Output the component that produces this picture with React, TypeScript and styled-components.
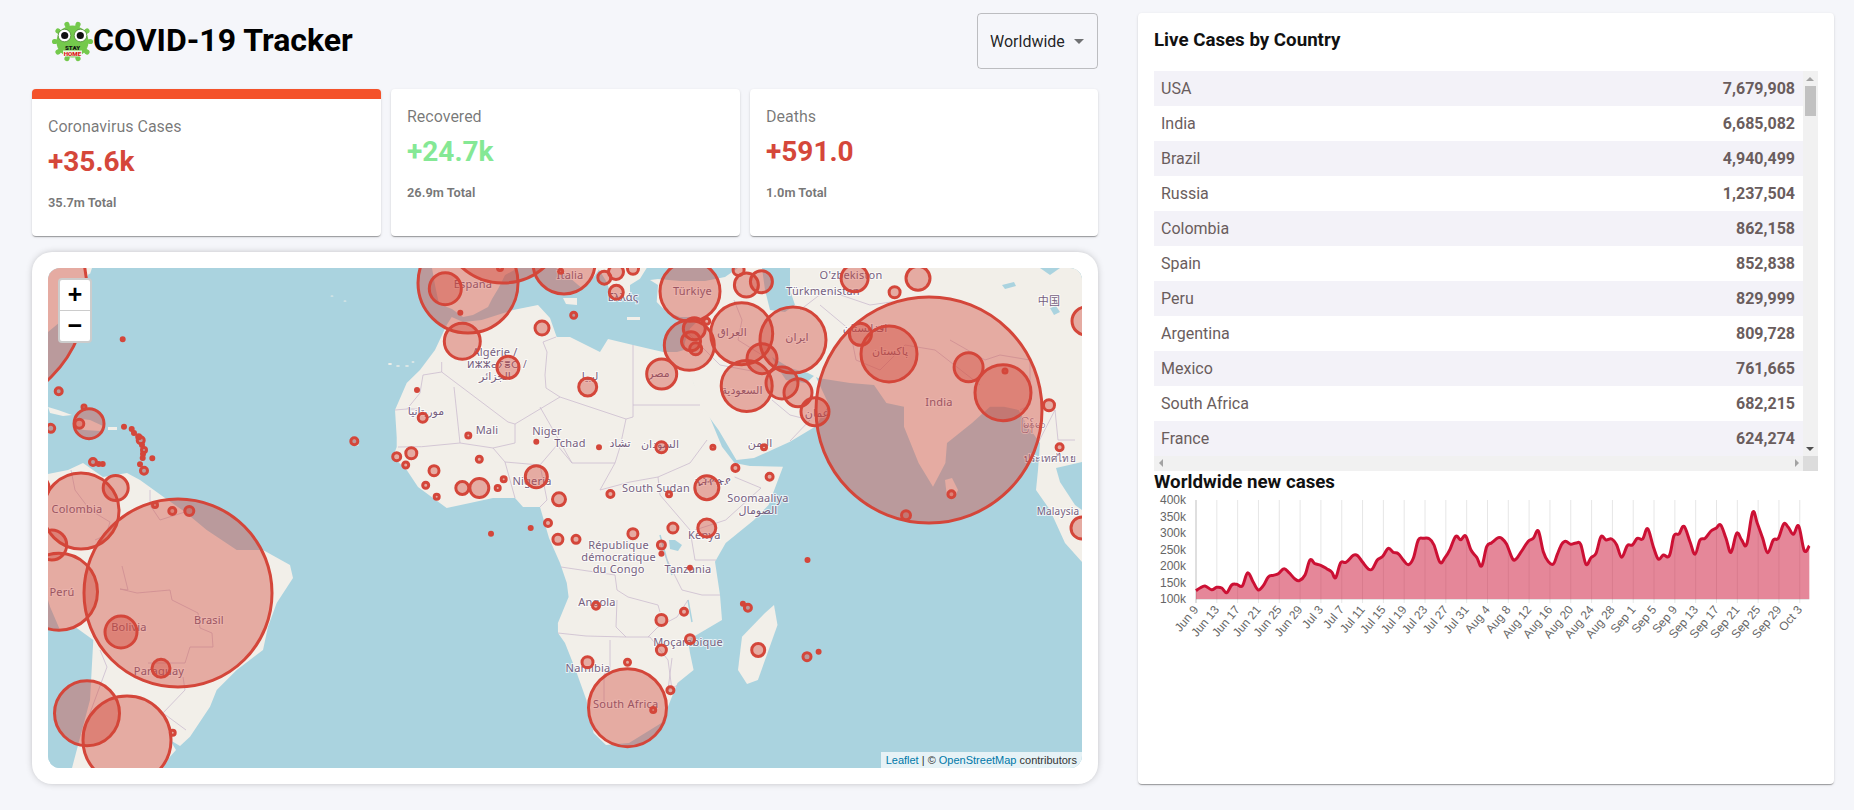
import React from "react";
import styled, { createGlobalStyle } from "styled-components";

const Global = createGlobalStyle`
  html, body { margin: 0; padding: 0; background: #f5f6fa; font-family: Roboto, "Liberation Sans", sans-serif; }
`;

const Page = styled.div`
  display: flex;
  align-items: flex-start;
  gap: 40px;
  width: 1854px;
  height: 810px;
  box-sizing: border-box;
  padding: 13px 20px 0 32px;
  overflow: hidden;
`;
const LeftColumn = styled.main`
  width: 1066px;
  flex: none;
  display: flex;
  flex-direction: column;
`;
const Header = styled.header`
  height: 56px;
  display: flex;
  align-items: center;
  justify-content: space-between;
  margin-bottom: 20px;
`;
const Brand = styled.div`
  display: flex;
  align-items: center;
  padding-left: 20px;
`;
const Title = styled.h1`
  margin: -2px 0 0 0;
  font-size: 32px;
  font-weight: 700;
  line-height: 1.2;
  color: #000;
`;
const Dropdown = styled.div`
  width: 121px;
  height: 56px;
  box-sizing: border-box;
  border: 1px solid rgba(0, 0, 0, 0.23);
  border-radius: 4px;
  padding-left: 12px;
  display: flex;
  align-items: center;
  font-size: 16px;
  color: rgba(0, 0, 0, 0.87);
  position: relative;
`;
const DropArrow = styled.span`
  position: absolute;
  right: 13px;
  top: 25px;
  width: 0;
  height: 0;
  border-left: 5px solid transparent;
  border-right: 5px solid transparent;
  border-top: 5px solid rgba(0, 0, 0, 0.54);
`;
const Stats = styled.section`
  display: grid;
  grid-template-columns: 349px 349px 348px;
  gap: 10px;
  height: 147px;
`;
const StatCard = styled.article<{ $active?: boolean }>`
  background: #fff;
  border-radius: 4px;
  overflow: hidden;
  box-sizing: border-box;
  padding: 16px 16px 0;
  border-top: ${(p) => (p.$active ? "10px solid #f4522a" : "0 none")};
  box-shadow: 0 2px 1px -1px rgba(0, 0, 0, 0.2), 0 1px 1px rgba(0, 0, 0, 0.14), 0 1px 3px rgba(0, 0, 0, 0.12);
`;
const StatLabel = styled.div`
  font-size: 16px;
  line-height: 24px;
  color: rgba(0, 0, 0, 0.54);
`;
const StatValue = styled.div<{ $color: string }>`
  font-size: 28px;
  font-weight: 700;
  line-height: 34px;
  margin-top: 6px;
  color: ${(p) => p.$color};
`;
const StatTotal = styled.div`
  font-size: 12.8px;
  font-weight: 700;
  line-height: 18px;
  margin-top: 15px;
  color: rgba(0, 0, 0, 0.54);
`;
const MapCard = styled.section`
  margin-top: 16px;
  height: 532px;
  box-sizing: border-box;
  padding: 16px;
  background: #fff;
  border-radius: 20px;
  box-shadow: 0 0 8px -3px rgba(0, 0, 0, 0.45);
`;
const MapFrame = styled.div`
  position: relative;
  height: 500px;
  border-radius: 12px;
  overflow: hidden;
  background: #aad3df;
  svg { display: block; }
`;
const ZoomControl = styled.div`
  position: absolute;
  left: 10px;
  top: 10px;
  width: 30px;
  border: 2px solid rgba(0, 0, 0, 0.2);
  border-radius: 4px;
  background-clip: padding-box;
  background: #fff;
`;
const ZoomButton = styled.div<{ $last?: boolean }>`
  height: 30px;
  overflow: hidden;
  text-align: center;
  font: 700 25px/33px "Liberation Mono", monospace;
  color: #000;
  border-bottom: ${(p) => (p.$last ? "0 none" : "1px solid #ccc")};
`;
const Attribution = styled.div`
  position: absolute;
  right: 0;
  bottom: 0;
  height: 16px;
  padding: 0 5px;
  font: 11px/16px "Liberation Sans", sans-serif;
  color: #333;
  background: rgba(255, 255, 255, 0.7);
  a { color: #0078a8; text-decoration: none; }
`;
const RightCard = styled.aside`
  width: 696px;
  height: 771px;
  flex: none;
  box-sizing: border-box;
  padding: 16px;
  background: #fff;
  border-radius: 4px;
  box-shadow: 0 2px 1px -1px rgba(0, 0, 0, 0.2), 0 1px 1px rgba(0, 0, 0, 0.14), 0 1px 3px rgba(0, 0, 0, 0.12);
`;
const SectionTitle = styled.h3`
  margin: 0;
  font-size: 18.72px;
  font-weight: 700;
  line-height: 22px;
  color: #111;
`;
const TableTitle = styled(SectionTitle)`
  margin-bottom: 20px;
`;
const TableBox = styled.div`
  display: grid;
  grid-template-columns: 649px 15px;
  grid-template-rows: 385px 15px;
  height: 400px;
`;
const Rows = styled.div`
  overflow: hidden;
`;
const Row = styled.div<{ $odd: boolean }>`
  height: 35px;
  box-sizing: border-box;
  padding: 0 8px 0 7px;
  display: flex;
  align-items: center;
  justify-content: space-between;
  font-size: 16px;
  color: #6a5d5d;
  background: ${(p) => (p.$odd ? "#f3f2f8" : "#fff")};
  strong { font-weight: 700; }
`;
const VBar = styled.div`
  background: #f1f1f1;
  position: relative;
`;
const VThumb = styled.div`
  position: absolute;
  left: 2px;
  top: 15px;
  width: 11px;
  height: 30px;
  background: #c1c1c1;
`;
const HBar = styled.div`
  background: #f1f1f1;
  position: relative;
`;
const Corner = styled.div`
  background: #dcdcdc;
`;
const Arrow = styled.span<{ $dir: "up" | "down" | "left" | "right"; $dark?: boolean }>`
  position: absolute;
  width: 0;
  height: 0;
  ${(p) => {
    const c = p.$dark ? "#505050" : "#a3a3a3";
    if (p.$dir === "up") return `left:3px;top:6px;border-left:4px solid transparent;border-right:4px solid transparent;border-bottom:4px solid ${c};`;
    if (p.$dir === "down") return `left:3px;bottom:5px;border-left:4px solid transparent;border-right:4px solid transparent;border-top:4px solid ${c};`;
    if (p.$dir === "left") return `left:5px;top:3px;border-top:4px solid transparent;border-bottom:4px solid transparent;border-right:4px solid ${c};`;
    return `right:4px;top:3px;border-top:4px solid transparent;border-bottom:4px solid transparent;border-left:4px solid ${c};`;
  }}
`;
const ChartSvg = styled.svg`
  display: block;
  margin-top: 2px;
`;
const AxisText = styled.text`
  font: 12px "Liberation Sans", Arial, sans-serif;
  fill: #666;
`;
const MapLabel = styled.text<{ $size?: number }>`
  font-family: "Noto Sans", "DejaVu Sans", "Noto Sans CJK SC", sans-serif;
  font-size: ${(p) => p.$size || 11}px;
  letter-spacing: 0.2px;
  fill: #76607f;
  text-anchor: middle;
  dominant-baseline: middle;
  stroke: rgba(255, 255, 255, 0.7);
  stroke-width: 2px;
  paint-order: stroke;
`;
const LogoText = styled.text<{ $color: string }>`
  font: 900 6.2px Roboto, sans-serif;
  fill: ${(p) => p.$color};
  text-anchor: middle;
`;

const countries: [string, string][] = [
  ["USA", "7,679,908"], ["India", "6,685,082"], ["Brazil", "4,940,499"], ["Russia", "1,237,504"],
  ["Colombia", "862,158"], ["Spain", "852,838"], ["Peru", "829,999"], ["Argentina", "809,728"],
  ["Mexico", "761,665"], ["South Africa", "682,215"], ["France", "624,274"],
];

const stats = [
  { label: "Coronavirus Cases", value: "+35.6k", total: "35.7m Total", color: "#d5473a", active: true },
  { label: "Recovered", value: "+24.7k", total: "26.9m Total", color: "#85e895", active: false },
  { label: "Deaths", value: "+591.0", total: "1.0m Total", color: "#d5473a", active: false },
];

function Logo() {
  const spikes = [0, 36, 72, 108, 144, 180, 216, 252, 288, 324];
  return (
    <svg width="41" height="41" viewBox="0 0 41 41">
      {spikes.map((a) => (
        <g key={a} transform={`rotate(${a + 18} 20.5 20.5)`}>
          <rect x="18.5" y="2" width="4" height="6" fill="#74c94c" />
          <circle cx="20.5" cy="2.6" r="2.6" fill="#74c94c" />
        </g>
      ))}
      <circle cx="20.5" cy="20.5" r="16" fill="#74c94c" />
      <circle cx="12.5" cy="14.5" r="6.3" fill="#fff" stroke="#3d7d22" strokeWidth="0.7" />
      <circle cx="28.5" cy="14.5" r="6.3" fill="#fff" stroke="#3d7d22" strokeWidth="0.7" />
      <circle cx="12.7" cy="14.5" r="3.6" fill="#111" />
      <circle cx="28.3" cy="14.5" r="3.6" fill="#111" />
      <rect x="11" y="29.5" width="19" height="6" fill="#fff" opacity="0.85" />
      <LogoText $color="#111" x="20.5" y="29">STAY</LogoText>
      <LogoText $color="#e01818" x="20.5" y="34.5">HOME</LogoText>
    </svg>
  );
}

const p1 = [18,287,30,279,45,273,65,284,80,277,95,279,110,293,125,270,140,268,157,273,173,233,190,262,205,285,220,272,235,246,250,241,265,236,282,221,297,233,315,252,328,257,345,240,360,195,375,206,392,211,410,221,425,231,437,248,452,203,468,202,490,181,503,182,518,202,535,222,547,222,562,195,578,184,595,160,610,172,625,176,640,195,655,209,670,190,685,135,700,130,718,131,732,150,750,202,765,188,780,163,797,124,812,134,827,123,843,165,860,187,875,213,890,155,905,143,925,128];
const p2 = [5,130,20,148,38,192,50,190,65,168,85,139,100,130,115,108,130,170,145,200,160,207,172,178,185,148,197,139,212,148,228,144,242,148,258,208,273,188,288,175,303,125,318,135,335,132,350,150,365,187,382,152,397,150,412,130,428,132,443,101,460,155,475,192,490,180,508,182,522,122,537,117,552,94,570,140,585,178,600,135,615,130,633,108,648,100,662,90,678,130,693,172,710,115,725,135,740,148,758,52,772,85,788,130,803,173,820,135,835,130,851,87,865,97,880,118,896,93,913,167,928,152];

function curvePoints(): [number, number][] {
  const pts: [number, number][] = [];
  for (let i = 0; i < p1.length; i += 2) pts.push([1190 + p1[i] / 3, 495 + p1[i + 1] / 3]);
  for (let i = 0; i < p2.length; i += 2) pts.push([1500 + p2[i] / 3, 495 + p2[i + 1] / 3]);
  return pts;
}
function smooth(pts: [number, number][]) {
  let d = `M${pts[0][0].toFixed(1)},${pts[0][1].toFixed(1)}`;
  for (let i = 0; i < pts.length - 1; i++) {
    const a = pts[Math.max(0, i - 1)], b = pts[i], c = pts[i + 1], e = pts[Math.min(pts.length - 1, i + 2)];
    const k = 0.18;
    d += ` C${(b[0] + (c[0] - a[0]) * k).toFixed(1)},${(b[1] + (c[1] - a[1]) * k).toFixed(1)} ${(c[0] - (e[0] - b[0]) * k).toFixed(1)},${(c[1] - (e[1] - b[1]) * k).toFixed(1)} ${c[0].toFixed(1)},${c[1].toFixed(1)}`;
  }
  return d;
}

const xTicks = ["Jun 9","Jun 13","Jun 17","Jun 21","Jun 25","Jun 29","Jul 3","Jul 7","Jul 11","Jul 15","Jul 19","Jul 23","Jul 27","Jul 31","Aug 4","Aug 8","Aug 12","Aug 16","Aug 20","Aug 24","Aug 28","Sep 1","Sep 5","Sep 9","Sep 13","Sep 17","Sep 21","Sep 25","Sep 29","Oct 3"];
const yTicks = ["400k","350k","300k","250k","200k","150k","100k"];

function Chart() {
  const pts = curvePoints();
  const line = smooth(pts);
  const last = pts[pts.length - 1];
  return (
    <ChartSvg width="664" height="170" viewBox="1154 495 664 170">
      {xTicks.map((t, i) => {
        const x = 1196 + i * 20.82;
        return (
          <g key={t}>
            <line x1={x} x2={x} y1={500} y2={603} stroke={i === 0 ? "rgba(0,0,0,0.25)" : "rgba(0,0,0,0.1)"} />
            <AxisText textAnchor="end" transform={`translate(${x + 3} 610) rotate(-50)`}>{t}</AxisText>
          </g>
        );
      })}
      {yTicks.map((t, i) => (
        <AxisText key={t} x={1186} y={504 + i * 16.5} textAnchor="end">{t}</AxisText>
      ))}
      <path d={`${line} L${last[0]},599 L${pts[0][0]},599 Z`} fill="rgba(204,16,52,0.5)" />
      <line x1={1196} x2={last[0]} y1={599.5} y2={599.5} stroke="rgba(0,0,0,0.1)" />
      <path d={line} fill="none" stroke="#cc1034" strokeWidth="3" />
    </ChartSvg>
  );
}

const poly = (s: string) => "M" + s.trim().replace(/\s+/g, " L") + " Z";
const land = [
  poly("48,268 85,268 90,272 85,280 73,300 60,322 48,332"),
  poly("48,474 68,470 83,463 103,477 127,473 140,480 165,498 185,512 206.7,530 236.7,550 263,550 290,565 293,578 276.7,603 268,626.7 263,650 236.7,670 216.7,690 210,706.7 190,736.7 180,746 170,740 176,750 170,756.7 163,768 72,768 90,700 93.3,640 76.7,628 60,630 50,606.7 48,600"),
  poly("432,268 435,285 439,304 452,309 463,317 473,315 488,307 492,299 498,289 505,275 518,268"),
  poly("556,268 566.7,275 576.7,283.7 583,289 590,282 595,275 600,268"),
  poly("598,268 606.7,282 610,292 616.7,300 623,297 630,298.7 630,285 640,278.7 646.7,268"),
  poly("563,298 577,298 577,305 566,304"),
  poly("627,317 640,317 640,320 627,320"),
  poly("650,280 658,279 680,281 705,281 725,277 738,268 762,268 1082,268 1082,562 1065,543 1050,510 1036,490 1038,470 1040,443 1025.7,423 1018.6,410 1004,406.7 990,406.7 972,423 947,443 945.4,463 933,486.7 918.6,463 904,426.7 904,406.7 886.4,403 874,385 850,383 818,378 808,373 790,368 772,357 777,367 786,380 797,381.7 806,383 815,375 829,405 815,426.7 790,441.7 754,458 736.4,460 718.6,430 704,410 690,375 684,352 685,342 690,328.7 696.7,322 693,317 680,317 666.7,312 656.7,302 658,285"),
  poly("538,305 550,318 556.7,337 570,337 600,352 608,339 633,345 663,352 677,352 684,350 693.6,383 708,413 722,446.7 734.6,463 750,466 783,466.7 768.6,505 754,520 725.7,543 715,561.7 720,595 722,620 688,640 690,653 693.6,670 677.5,683 661.4,723 629,743 606,745 593.6,733 586.4,700 575.7,670 565,643 558,633 557.9,623 568.6,597 566.8,583 560,563 549,538 540,507 523,507 515,498 493,498 470,503 446.7,508 418,487 406.7,470 393,457 396.7,447 396.7,437 395,410 406.7,383 420,370 435,350 446.7,325 451.7,317 463,322 481.7,320 513,310"),
  poly("774,605 777.5,625 768.6,650 757.9,680 747,684 738,670 742,636.7 765,613"),
  poly("945,480 952,478 958,490 954,498 947,497"),
  poly("48,407 58,410 72,415 63,416 50,413"),
  poly("74,418 90,420 103,426 100,431 84,430 76,428"),
  poly("108,427 117,427 117,430 108,430"),
  poly("82,268 92,268 90,274 84,272"),
];
const islands: [number, number, number, number][] = [
  [332,296,1.5,.6],[345,301,1.5,.6],[390,364,2,1],[398,366,2,.8],[407,366,2,.8],[413,362,1.5,.8],[354,439,2,.8],[357,445,2,.8],[1076,270,3,2],
];
const waters = [
  poly("762,268 790,268 790,290 795,305 785,312 770,310 765,290"),
  poly("1056,468 1082,462 1082,510 1075,505 1060,482"),
  poly("669,540 675,540 682,545 678,551 670,549"),
  poly("1002,285 1014,282 1016,286 1005,289"),
  poly("1050,308 1056,306 1060,312 1054,315"),
  poly("1040,268 1060,268 1050,275"),
];
const borders = [
  "441.7,362 441.7,372 508,422 515,424 560,397 575,402",
  "441.7,372 423,375 420,393 407,409 395,410",
  "407,409 418,409",
  "454,387 460,443 421.7,446.7 398,447",
  "560,397 546,388 545,375 547,352 543,342 556,337",
  "575,402 626,419 633,417 633,345",
  "633,405 700,405",
  "626,419 620,447 615,463 572,463 540,407",
  "515,424 515,443 493,448 460,443",
  "493,448 505,462 540,465 557,445 572,463",
  "505,462 515,498",
  "540,465 547,500 540,507",
  "615,463 600,490 630,482 658,477 690,463 707,440",
  "658,477 660,495 690,530",
  "734.6,477 761,488 725.7,520 695,530",
  "690,530 695,560 716,560",
  "660,545 672,570 682,590 702,595 720,595",
  "561,567 615,575 617,590 628,597 658,605 660,612",
  "617,600 616,627 626,637",
  "558,633 586,636 626,637",
  "610,640 610,670 604,674 604,703",
  "626,637 650,637 668,660 672,690",
  "648,637 658,627 677,617 688,600",
  "672,658 668,690 678,685",
  "122,566 128,590 120,589 137,593 170,590 172,600 198,613 200,628 212,633 213,647 190,647 185,663 148,663",
  "183,677 185,690 163,713 186,730",
  "100,650 107,667 90,713 83,733",
  "150,490 150,505 160,520 185,512",
  "71,470 75,490 90,510 110,522 106,535 95,540",
  "675,320 700,345 720,365 757,372",
  "734,300 742,320 738,340 770,360",
  "820,305 850,330 856,360 880,370 905,345 935,350 980,385",
  "800,310 826,290 870,305 905,300",
  "950,340 985,360 1000,355 1030,360 1030,405 1020,410",
  "1038,443 1055,410 1058,440 1075,440",
  "772,400 790,415 810,420 790,441",
];

type C = [number, number, number];
const circles: C[] = [
  [-34,291,121],[58.7,391.3,3.5],[84,407,2],[89,423.7,15],[79.3,423.7,4.5],[50.7,428.3,4],[122.7,339.3,1.5],[124,426.7,1.5],[131.7,429,1.5],[134,433,1.5],[138.7,436.7,2],[140.7,440.3,3.5],[142,445,1.5],[144,450,2.5],[143,454,1.5],[142.7,458,1.5],[152.3,458.3,1.5],[93,462,3.5],[98.7,464,1.5],[102.7,464,1.5],[140,464.3,1.5],[144,470.7,3.5],
  [468,283,50],[445.3,288.7,16],[460.3,312.7,1.5],[462.3,341.3,18],[503,221,62],[500,268,2.5],[564,263,31],[560.7,271.3,2],[604.3,277.7,6.5],[616,272,7.5],[633,268.7,5.5],[616.3,292.3,7],[573.7,315.3,3],[542,328,7],[508,367.3,11],
  [690,291.3,30],[689.3,345.3,25],[694.3,328.7,11],[691,341.3,9.5],[695.7,348.7,6],[706.7,321.3,3],[741.7,333.7,31],[746.7,386,25.5],[793,340,33],[762,358.7,15],[782,383,16],[798,392.7,14],[815,411.7,14],[661.7,374,15],[587.7,387,9],
  [929,410,113],[860.4,334.3,11],[889,354,28],[968.6,367.3,14.5],[1003,392.7,28],[1005,371,2],[1049,405.3,5.5],[918,278.3,12],[894.6,292.3,5.5],[854.6,278.3,13.5],[746.4,285,12],[761.4,281.7,11],[738.6,270,5.5],[1059.6,447.3,3.5],[1086,321,14],[1082,528,11],[951.4,494.3,3.5],[906,515.3,4.5],
  [422.7,417.7,4.5],[417,390,1.5],[468.3,435.5,2.5],[536.3,441.7,1.5],[661.4,447.3,5.5],[599,447.3,1.5],[712.9,447.3,2],[764,447.3,2.5],[735.4,468,3.5],[769.6,476.7,3.5],[706.8,487.7,12],[669,494.3,2.5],[610.4,494,3.5],[559,499.3,6.5],[536.3,476.7,11],[548,523,3.5],[672.9,528,5],[706.8,528,9],[557.9,539.3,5],[576,539.3,4],[632.9,533.7,5],[661.4,545,4],[661.4,553.7,1.5],[690,567.7,1.5],[596,605.7,3.5],[684,611.7,3.5],[661.4,620,5.5],[690,639.3,4.5],[661.4,650,5],[587.5,662.3,5.5],[627.5,662.3,3],[627.5,707.7,39],[653.2,710,2.5],[670.4,690.3,3.5],[742.9,603.7,1.5],[747.9,607.7,3.5],[758.2,650,6.5],[807,656.7,4],[818.6,651.7,1.5],[807.5,560,1.5],
  [354.3,441.3,3.5],[396.7,456.7,4],[411.3,453.3,5.5],[405.7,465,3],[434,470.7,5],[425.7,485.3,3],[436.7,496.7,2.5],[462.3,488,6.5],[479.3,488,9.5],[497.7,488,2.5],[503.7,479.3,2.5],[479.3,459.3,3],[491,533.7,1.5],[530.7,528,1.5],
  [81,511,38],[115.7,488,12.5],[36,488,13],[51.7,545,15],[59,591.7,38.5],[178,593,94],[121,632,16],[161,668.3,9],[87,713.3,32.5],[127,740,44],[172.7,732.7,2.5],[155,505,2.5],[172.3,511,3.5],[189.3,511,4.5],
];
type L = [string, number, number, number?];
const labels: L[] = [
  ["España",473,285],["Algérie /",495,353],["ⵍⵣⵣⴰⵢⴻⵔ /",497,365,10],["الجزائر",495,377],["موريتانيا",426,412],["Mali",487,431.5],["Niger",547,432],["Nigeria",532,482],["Colombia",77,510],
  ["Perú",62,593],["Brasil",209,621.5],["Bolivia",129,628],["Paraguay",159,672],["Italia",570,276],["Ελλάς",623,298],["Türkiye",692.5,292],["O'zbekiston",851,276],["Türkmenistan",823,292],["中国",1049,302],
  ["العراق",732,333],["ايران",797,338],["افغانستان",865,329],["پاکستان",890,352],["مصر",659,374],["ليبيا",590,377],["السعودية",742,391],["عمان",817,414],["India",939,403],["Tchad",570,444],["تشاد",620,444],["السودان",660,445],["اليمن",760,444],["South Sudan",656,489],["Soomaaliya",758,498.7],["الصومال",758,511],["ประเทศไทย",1050,459,10],["မြန်မာ",1033,425],["Malaysia",1058,512,10],["ኢትዮጵያ",712.5,481.7],
  ["République",618.6,545.7],["démocratique",618.6,557.7],["du Congo",618.6,569.7],["Kenya",704.3,535.7],["Tanzania",688,570.3],["Angola",597,603.3],["Moçambique",688,643.3],["Namibia",588,669.3],["South Africa",625.7,705.3],
];

function WorldMap() {
  return (
    <svg width="1034" height="500" viewBox="48 268 1034 500">
      <rect x="48" y="268" width="1034" height="500" fill="#aad3df" />
      {land.map((d, i) => <path key={i} d={d} fill="#f2efe9" strokeLinejoin="round" />)}
      {islands.map(([x, y, r, q], i) => <ellipse key={i} cx={x} cy={y} rx={r} ry={q} fill="#f2efe9" />)}
      {waters.map((d, i) => <path key={i} d={d} fill="#aad3df" />)}
      <path d="M660,535 L667,560 L672,575 M688,600 L692,622" fill="none" stroke="#aad3df" strokeWidth="1.5" />
      {borders.map((b, i) => <polyline key={i} points={b} fill="none" stroke="#cbbdcf" strokeWidth="0.8" />)}
      {labels.map(([t, x, y, s], i) => <MapLabel key={i} x={x} y={y} $size={s}>{t}</MapLabel>)}
      {circles.map(([x, y, r], i) => (
        <circle key={i} cx={x} cy={y} r={r} fill="rgba(210,69,55,0.4)" stroke="#d4463a" strokeWidth="3" />
      ))}
    </svg>
  );
}

export default function App() {
  return (
    <Page>
      <Global />
      <LeftColumn>
        <Header>
          <Brand>
            <Logo />
            <Title>COVID-19 Tracker</Title>
          </Brand>
          <Dropdown>
            Worldwide
            <DropArrow />
          </Dropdown>
        </Header>
        <Stats>
          {stats.map((s) => (
            <StatCard key={s.label} $active={s.active}>
              <StatLabel>{s.label}</StatLabel>
              <StatValue $color={s.color}>{s.value}</StatValue>
              <StatTotal>{s.total}</StatTotal>
            </StatCard>
          ))}
        </Stats>
        <MapCard>
          <MapFrame>
            <WorldMap />
            <ZoomControl>
              <ZoomButton>+</ZoomButton>
              <ZoomButton $last>−</ZoomButton>
            </ZoomControl>
            <Attribution>
              <a>Leaflet</a> | © <a>OpenStreetMap</a> contributors
            </Attribution>
          </MapFrame>
        </MapCard>
      </LeftColumn>
      <RightCard>
        <TableTitle>Live Cases by Country</TableTitle>
        <TableBox>
          <Rows>
            {countries.map(([n, c], i) => (
              <Row key={n} $odd={i % 2 === 0}>
                <span>{n}</span>
                <strong>{c}</strong>
              </Row>
            ))}
          </Rows>
          <VBar>
            <Arrow $dir="up" />
            <VThumb />
            <Arrow $dir="down" $dark />
          </VBar>
          <HBar>
            <Arrow $dir="left" />
            <Arrow $dir="right" />
          </HBar>
          <Corner />
        </TableBox>
        <SectionTitle>Worldwide new cases</SectionTitle>
        <Chart />
      </RightCard>
    </Page>
  );
}
